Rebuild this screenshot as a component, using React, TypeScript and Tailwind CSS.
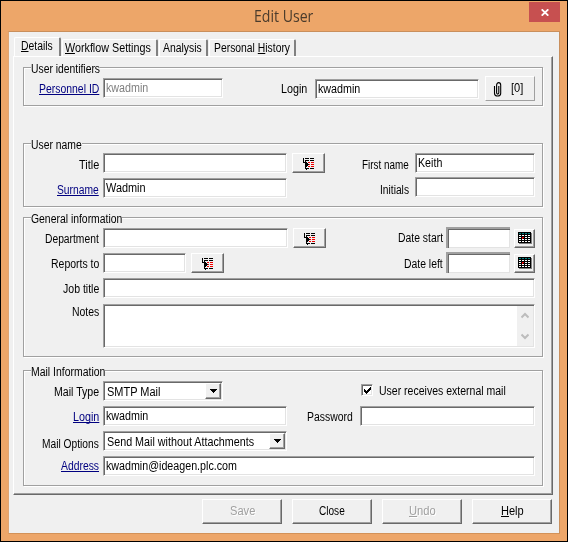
import { useLayoutEffect, useRef } from 'react';
import type { ReactNode } from 'react';

const cx = (...c: (string | undefined | false)[]) => c.filter(Boolean).join(' ');

/* Narrow UI lettering: squeezes a line of text into the width its class gives. */
function Txt({ className, children }: { className?: string; children: ReactNode }) {
  const outer = useRef<HTMLSpanElement>(null);
  const inner = useRef<HTMLSpanElement>(null);
  useLayoutEffect(() => {
    if (outer.current && inner.current) {
      const scale = outer.current.clientWidth / inner.current.offsetWidth;
      inner.current.style.transform = `scaleX(${scale})`;
    }
  }, []);
  return (
    <span ref={outer} className={cx('block h-[14px] shrink-0 whitespace-nowrap leading-[14px]', className)}>
      <span ref={inner} className="inline-block origin-left">{children}</span>
    </span>
  );
}

function LinkTxt({ className, children }: { className: string; children: ReactNode }) {
  return (
    <Txt className={cx('text-[#000080]', className)}>
      <u className="decoration-1 underline-offset-1 [text-decoration-skip-ink:none]">{children}</u>
    </Txt>
  );
}

const ink: Record<string, string> = { k: '#000', r: '#f00000', t: '#008080', w: '#fff', g: '#808080' };

/* Small bitmap icon: one character of each row is one pixel. */
function Pixels({ rows, className }: { rows: string[]; className?: string }) {
  const w = rows[0].length;
  return (
    <svg className={cx('shrink-0', className)} width={w} height={rows.length} viewBox={`0 0 ${w} ${rows.length}`} shapeRendering="crispEdges">
      {rows.flatMap((row, y) =>
        [...row].map((c, x) => (ink[c] ? <rect key={`${x}-${y}`} x={x} y={y} width="1" height="1" fill={ink[c]} /> : null)),
      )}
    </svg>
  );
}

const browseIcon = [
  'k.kkkk.kkkk.',
  'k...........',
  'k.kkkk.kkkk.',
  'k.k.........',
  'kkkk.rr.rrr.',
  '..kkk.......',
  '..kkkkr.rrr.',
  '..kkk.......',
  '..kk.rr.rrr.',
  '..k.........',
  '..kkkk.kkkk.',
  '...k........',
];

const calendarIcon = [
  'kkkkkkkkkkkkk.',
  'kttkttkttkttkg',
  'kkkkkkkkkkkkkg',
  'kwwkwwkwwkwwkg',
  'kkkkkkkkkkkkkg',
  'kwwkrrkwwkwwkg',
  'kkkkrkkkkkkkkg',
  'kwwkwwkwwkwwkg',
  'kkkkkkkkkkkkkg',
  'kwwkwwkwwkwwkg',
  'kkkkkkkkkkkkkg',
  '.ggggggggggggg',
];

const tickIcon = ['......k.', '.....kk.', 'k...kkk.', 'kk.kkk..', 'kkkkk...', '.kkk....', '..k.....'];

const sunken =
  'shrink-0 border border-t-[#a0a0a0] border-l-[#a0a0a0] border-b-white border-r-white bg-white shadow-[inset_1px_1px_0_#696969,inset_-1px_-1px_0_#e3e3e3]';
const raised =
  'shrink-0 flex items-center justify-center border border-t-white border-l-white border-b-[#696969] border-r-[#696969] bg-[#f0f0f0] shadow-[inset_-1px_-1px_0_#a0a0a0]';

function Field({ className, children }: { className?: string; children?: ReactNode }) {
  return <div className={cx(sunken, 'h-5 pl-[2px] pt-[2px]', className)}>{children}</div>;
}

function Label({ className, children }: { className?: string; children: ReactNode }) {
  return <div className={cx('mr-1 flex w-[75px] shrink-0 justify-end', className)}>{children}</div>;
}

function Group({ title, titleWidth, className, children }: { title: string; titleWidth: string; className: string; children: ReactNode }) {
  return (
    <section className={cx('ml-[9px] w-[520px] border border-[#a0a0a0] shadow-[1px_1px_0_#fff,inset_1px_1px_0_#fff]', className)}>
      <div className="-mt-[6px] ml-[7px] w-fit bg-[#f0f0f0]">
        <Txt className={titleWidth}>{title}</Txt>
      </div>
      {children}
    </section>
  );
}

function Browse({ className }: { className?: string }) {
  return (
    <div className={cx(raised, 'h-5 w-[33px] pl-px pt-[2px]', className)}>
      <Pixels rows={browseIcon} />
    </div>
  );
}

function Calendar() {
  return (
    <div className={cx(raised, 'ml-1 mt-px h-[19px] w-[21px] pb-px pl-px')}>
      <Pixels rows={calendarIcon} />
    </div>
  );
}

function DateBox() {
  return (
    <div className="ml-[3px] h-[21px] w-[64px] shrink-0 -mt-px border-l-2 border-t-2 border-[#a0a0a0] bg-white shadow-[inset_1px_1px_0_#696969,inset_-1px_-1px_0_#e3e3e3]" />
  );
}

function Combo({ className, children }: { className: string; children: ReactNode }) {
  return (
    <div className={cx(sunken, 'flex h-5 justify-between p-px pl-[3px]', className)}>
      <div className="mt-[2px]">{children}</div>
      <div className={cx(raised, 'h-4 w-4 pl-px')}>
        <Pixels rows={['kkkkkkk', '.kkkkk.', '..kkk..', '...k...']} />
      </div>
    </div>
  );
}

function Tab({ className, children }: { className: string; children: ReactNode }) {
  return (
    <div className={cx('h-[17px] shrink-0 rounded-t-[2px] border-l border-t border-r-2 border-l-white border-t-white border-r-[#808080]', className)}>
      {children}
    </div>
  );
}

function Push({ disabled, children }: { disabled?: boolean; children: ReactNode }) {
  return (
    <div className={cx(raised, 'h-[25px] w-20 pb-px', disabled && 'text-[#a0a0a0] [text-shadow:1px_1px_0_#fff]')}>
      {children}
    </div>
  );
}

export default function App() {
  return (
    <div className="flex h-[542px] w-[568px] flex-col border border-black bg-[#eda669] font-['Liberation_Sans',Arial,sans-serif] text-[12px] text-black">
      <header className="flex h-[30px] shrink-0 items-start pl-[253px] text-[#4a3b2c]">
        <Txt className="mt-[5px] h-[20px] w-[59px] font-['Open_Sans',sans-serif] text-[16px] leading-[20px]">Edit User</Txt>
        <div className="ml-auto mr-[7px] mt-px flex h-5 w-[31px] items-center justify-center bg-[#c75050]">
          <svg width="8" height="7" viewBox="0 0 8 7">
            <path d="M.7.3 7.3 6.7M7.3.3.7 6.7" stroke="#fff" strokeWidth="1.8" />
          </svg>
        </div>
      </header>

      <main className="ml-[7px] h-[503px] w-[552px] shrink-0 border border-b-[#d39258] border-l-[#dfa574] border-r-[#c98f5c] border-t-[#c98f5c] bg-[#f0f0f0]">
        <nav className="ml-[5px] flex h-6 items-end">
          <div className="h-[19px] w-[47px] shrink-0 rounded-t-[2px] border-l border-t border-r-2 border-l-white border-t-white border-r-[#808080] pl-[6px] pt-px">
            <Txt className="w-[32px]"><u>D</u>etails</Txt>
          </div>
          <Tab className="ml-px w-[96px] pl-[2px] pt-px">
            <Txt className="w-[86px]"><u>W</u>orkflow Settings</Txt>
          </Tab>
          <Tab className="ml-px w-[49px] pl-[3px] pt-px">
            <Txt className="w-[39px]">Analysis</Txt>
          </Tab>
          <Tab className="ml-px w-[87px] pl-[4px] pt-px">
            <Txt className="w-[76px]">Personal <u>H</u>istory</Txt>
          </Tab>
        </nav>

        <div className="ml-1 flex h-[439px] w-[540px] flex-col border border-b-[#696969] border-l-white border-r-[#696969] border-t-white shadow-[inset_-1px_-1px_0_#a0a0a0]">
          <Group title="User identifiers" titleWidth="w-[69px]" className="mt-[10px] h-[39px] shrink-0">
            <div className="flex items-start">
              <Label className="mt-[6px]"><LinkTxt className="w-[60px]">Personnel ID</LinkTxt></Label>
              <Field className="mt-[2px] w-[120px] text-[#808080]"><Txt className="w-[42px]">kwadmin</Txt></Field>
              <Txt className="ml-[58px] mt-[6px] w-[26px]">Login</Txt>
              <Field className="ml-2 mt-[3px] w-[164px]"><Txt className="w-[42px]">kwadmin</Txt></Field>
              <div className="ml-[6px] flex h-[25px] w-[50px] shrink-0 border border-b-[#a0a0a0] border-l-white border-r-[#a0a0a0] border-t-white">
                <svg className="ml-[7px] mt-[5px]" width="10" height="15" viewBox="0 0 10 15" fill="none" stroke="#000" strokeWidth="1.1">
                  <path d="M1.5 4v7.2c0 3.8 6.2 3.8 6.2 0V3.2c0-3.4-4.1-3.4-4.1 0v7.6c0 1.7 2.2 1.7 2.2 0V4" />
                </svg>
                <Txt className="ml-[8px] mt-1 w-[12px]">[0]</Txt>
              </div>
            </div>
          </Group>

          <Group title="User name" titleWidth="w-[51px]" className="mt-[37px] h-[64px] shrink-0">
            <div className="mt-px flex h-[25px] items-start">
              <Label className="mt-[5px]"><Txt className="w-[20px]">Title</Txt></Label>
              <Field className="w-[184px]" />
              <Browse className="ml-[5px]" />
              <Txt className="ml-[37px] mt-[5px] w-[47px]">First name</Txt>
              <Field className="ml-[6px] w-[120px]"><Txt className="w-[24px]">Keith</Txt></Field>
            </div>
            <div className="flex items-start">
              <Label className="mt-[5px]"><LinkTxt className="w-[42px]">Surname</LinkTxt></Label>
              <Field className="w-[184px]"><Txt className="w-[40px]">Wadmin</Txt></Field>
              <Txt className="ml-[93px] mt-[5px] w-[29px]">Initials</Txt>
              <Field className="-mt-px ml-[6px] w-[120px]" />
            </div>
          </Group>

          <Group title="General information" titleWidth="w-[91px]" className="mt-[10px] h-[140px] shrink-0">
            <div className="mt-[2px] flex h-[25px] items-start">
              <Label className="mt-1"><Txt className="w-[54px]">Department</Txt></Label>
              <Field className="w-[185px]" />
              <Browse className="ml-[5px]" />
              <Txt className="ml-[72px] mt-[3px] w-[45px]">Date start</Txt>
              <DateBox />
              <Calendar />
            </div>
            <div className="flex h-[25px] items-start">
              <Label className="mt-1"><Txt className="w-[48px]">Reports to</Txt></Label>
              <Field className="w-[83px]" />
              <Browse className="ml-[5px]" />
              <Txt className="ml-[180px] mt-1 w-[39px]">Date left</Txt>
              <DateBox />
              <Calendar />
            </div>
            <div className="flex h-[26px] items-start">
              <Label className="mt-1"><Txt className="w-[36px]">Job title</Txt></Label>
              <Field className="w-[432px]" />
            </div>
            <div className="flex items-start">
              <Label className="mt-px"><Txt className="w-[27px]">Notes</Txt></Label>
              <div className={cx(sunken, 'flex h-[44px] w-[432px] justify-end p-px')}>
                <div className="flex w-4 flex-col items-center justify-between bg-[#f0f0f0] py-[6px]">
                  <svg width="8" height="7" viewBox="0 0 8 7" fill="none" stroke="#bcbcbc" strokeWidth="2"><path d="M.5 5.5 4 2l3.500 3.500" /></svg>
                  <svg width="8" height="7" viewBox="0 0 8 7" fill="none" stroke="#bcbcbc" strokeWidth="2"><path d="M.5 1.500 4 5l3.500-3.500" /></svg>
                </div>
              </div>
            </div>
          </Group>

          <Group title="Mail Information" titleWidth="w-[74px]" className="mt-[13px] h-[116px] shrink-0">
            <div className="mt-[2px] flex h-[25px] items-start">
              <Label className="mt-1"><Txt className="w-[45px]">Mail Type</Txt></Label>
              <Combo className="w-[120px]"><Txt className="w-[53px]">SMTP Mail</Txt></Combo>
              <div className={cx(sunken, 'ml-[138px] mt-[3px] flex h-3 w-3 items-center justify-center pl-px pt-px')}>
                <Pixels rows={tickIcon} />
              </div>
              <Txt className="ml-[6px] mt-[3px] w-[127px]">User receives external mail</Txt>
            </div>
            <div className="flex h-[25px] items-start">
              <Label className="mt-1"><LinkTxt className="w-[26px]">Login</LinkTxt></Label>
              <Field className="w-[184px]"><Txt className="w-[42px]">kwadmin</Txt></Field>
              <Txt className="ml-5 mt-1 w-[46px]">Password</Txt>
              <Field className="ml-[7px] w-[175px]" />
            </div>
            <div className="flex h-[25px] items-start">
              <Label className="mt-[6px]"><Txt className="w-[57px]">Mail Options</Txt></Label>
              <Combo className="w-[184px]"><Txt className="w-[147px]">Send Mail without Attachments</Txt></Combo>
            </div>
            <div className="flex items-start">
              <Label className="mt-[3px]"><LinkTxt className="w-[38px]">Address</LinkTxt></Label>
              <Field className="w-[432px]"><Txt className="w-[131px]">kwadmin@ideagen.plc.com</Txt></Field>
            </div>
          </Group>
        </div>

        <footer className="ml-[193px] mt-1 flex gap-[10px]">
          <Push disabled><Txt className="w-[25px]">Save</Txt></Push>
          <Push><Txt className="w-[26px]">Close</Txt></Push>
          <Push disabled><Txt className="w-[27px]"><u>U</u>ndo</Txt></Push>
          <Push><Txt className="w-[23px]"><u>H</u>elp</Txt></Push>
        </footer>
      </main>
    </div>
  );
}
